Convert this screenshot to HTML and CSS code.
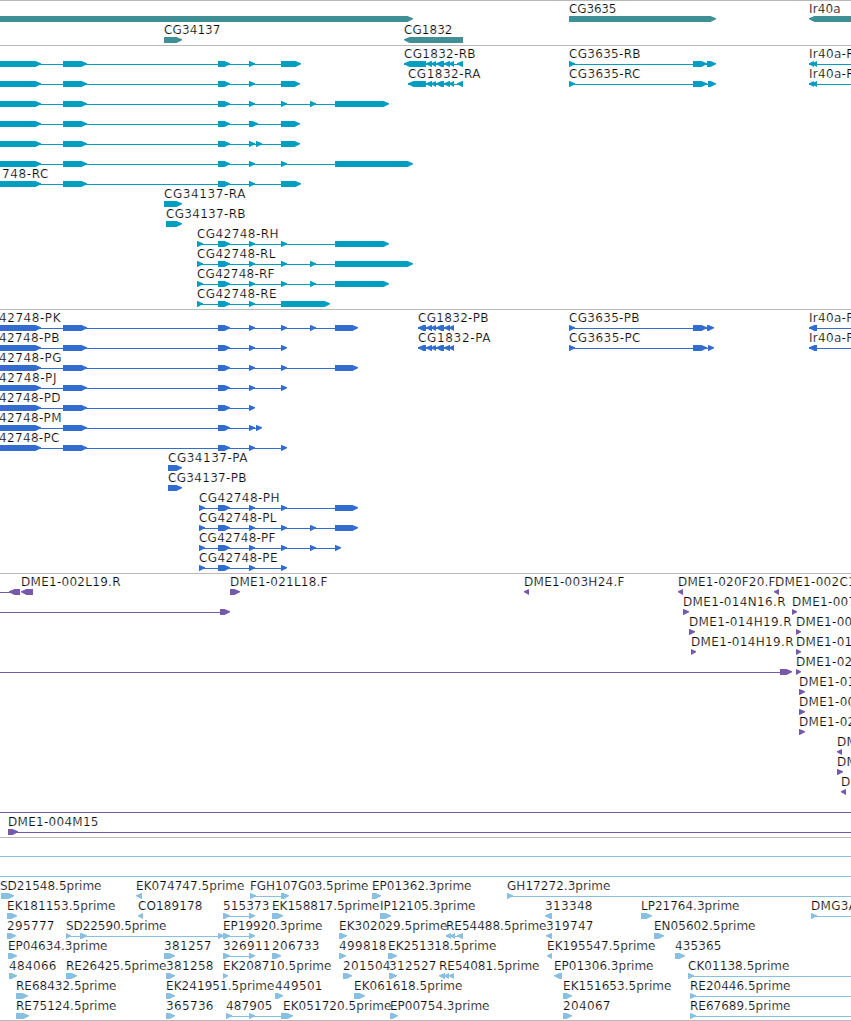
FILE: index.html
```
<!DOCTYPE html>
<html lang="en">
<head>
<meta charset="utf-8">
<title>Genome browser</title>
<link rel="stylesheet" href="styles.css">
</head>
<body>
<main class="browser" id="browser"></main>
<script src="tracks.js"></script>
</body>
</html>
```
FILE: styles.css
```
body {
  margin: 0;
  background: #fff;
}

.browser {
  display: flex;
  flex-direction: column;
  width: 851px;
  height: 1020px;
  overflow: hidden;
  border-bottom: 1px solid #bababa;
}

.track {
  flex: none;
  box-sizing: border-box;
  border-top: 1px solid #bababa;
}

.track-canvas {
  display: block;
  width: 851px;
  height: 100%;
  overflow: hidden;
}

.track-gene { height: 45px; fill: #3f8f96; }
.track-transcript { height: 264px; fill: #009fc2; }
.track-protein { height: 264px; fill: #316dd0; }
.track-clone { height: 264px; fill: #7759a9; }
.track-est { height: 183px; fill: #89bfe0; }

.label {
  fill: #000;
  stroke: #fff;
  stroke-width: 0.2px;
  font-family: "DejaVu Sans", sans-serif;
  font-size: 12px;
  white-space: pre;
}

.label-open {
  letter-spacing: 0.3px;
}
```
FILE: tracks.js
```
// Row syntax: "a>b" forward block, "a<b" reverse block, "a=b" connector line,
// followed after "|" by labels written as start,end,text (end may be empty).
const head = "-10=281 -10>41 63>87 218>230 ";
const phead = "-10>41 63>87 218>230 ";
const tracks = [
  { kind: "gene", pitch: 21, rows: [
    "-10>413 569>716 809<870|569,617,CG3635|809,841,Ir40a",
    "164>182 404<463|164,221,CG34137|404,453,CG1832"
  ] },
  { kind: "transcript", pitch: 20, rows: [
    head + "249>255 281>301 404=463 404<426 426<432 431<436 436<444 444<450 449<454 457<463 569=715 569>575 693>707 707>716 809=851 809<814 812<817|404,476,CG1832-RB|569,641,CG3635-RB|809,,Ir40a-R",
    head + "249>255 281>300 408=463 408<426 426<432 431<436 436<444 444<450 449<454 457<463 569=715 569>575 693>707 708>716 809=851 809<814 812<817|408,481,CG1832-RA|569,641,CG3635-RC|809,,Ir40a-R",
    head + "281=335 249>255 281>287 310>316 335>389",
    head + "249>258 281>300",
    head + "249>255 256>262 281>300",
    head + "281=335 249>255 281>287 335>413",
    head + "249>255 281>301|2,49,748-RC",
    "164>182|164,246,CG34137-RA",
    "166>182|166,246,CG34137-RB",
    "197=335 197>203 218>230 249>255 281>287 335>389|197,279,CG42748-RH",
    "197=335 197>203 218>230 249>255 281>287 310>316 335>413|197,276,CG42748-RL",
    "197=335 197>203 218>230 249>255 281>287 310>316 335>389|197,275,CG42748-RF",
    "197=281 197>203 218>230 249>255 281>330|197,277,CG42748-RE"
  ] },
  { kind: "protein", pitch: 20, rows: [
    "0=335 " + phead + "249>255 281>287 310>316 335>358 418=454 418<426 426<432 431<436 436<444 444<450 449<454 569=712 569>575 693>707 707>714 809=851 809<817|-1,61,42748-PK|418,489,CG1832-PB|569,640,CG3635-PB|809,,Ir40a-P",
    "0=285 " + phead + "249>255 281>287 418=454 418<426 426<432 431<436 436<444 444<450 449<454 569=712 569>575 693>707 708>714 809=851 809<817|-1,60,42748-PB|418,491,CG1832-PA|569,641,CG3635-PC|809,,Ir40a-P",
    "0=335 " + phead + "249>255 281>287 335>358|-1,62,42748-PG",
    "0=285 " + phead + "249>255 281>287|-1,57,42748-PJ",
    "0=253 " + phead + "249>255|-1,61,42748-PD",
    "0=260 " + phead + "249>255 256>262|-1,62,42748-PM",
    "0=285 " + phead + "249>255 281>287|-1,60,42748-PC",
    "168>182|168,248,CG34137-PA",
    "168>182|168,247,CG34137-PB",
    "199=335 199>205 218>230 249>255 281>287 335>358|199,280,CG42748-PH",
    "199=335 199>205 218>230 249>255 281>287 310>316 335>358|199,277,CG42748-PL",
    "199=338 199>205 218>230 249>255 281>287 310>316 335>341|199,276,CG42748-PF",
    "199=285 199>205 218>230 249>255 281>287|199,278,CG42748-PE"
  ] },
  { kind: "clone", pitch: 20, rows: [
    "0=12 9<20 21<33 230>240 524<529 678<683 774<779|21,121,DME1-002L19.R|230,328,DME1-021L18.F|524,625,DME1-003H24.F|678,776,DME1-020F20.F|775,,DME1-002C1",
    "0=222 220>230 683>689 792>797|683,786,DME1-014N16.R|792,,DME1-007",
    "689>695 796>801|689,792,DME1-014H19.R|796,,DME1-00",
    "691>696 796>801|691,794,DME1-014H19.R|796,,DME1-01",
    "0=782 780>792 796>801|796,,DME1-02",
    "799>805|799,,DME1-01",
    "799>805|799,,DME1-00",
    "799>805|799,,DME1-02",
    "837<842|837,,DM",
    "837>843|837,,DM",
    "841<846|841,,D",
    "0=851",
    "8=851 8>18|8,99,DME1-004M15"
  ] },
  { kind: "est", pitch: 20, rows: [
    "0=851",
    "0=851",
    "1>14 136<142 250=285 250>256 281>289 372>381 507=851 507>513|0,102,SD21548.5prime|136,245,EK074747.5prime|250,369,FGH107G03.5prime|372,472,EP01362.3prime|507,611,GH17272.3prime",
    "7>17 138<143 223=253 223>230 249>255 272>283 380>391 545<552 641>652 811=851 811>817|7,116,EK181153.5prime|138,203,CO189178|223,270,515373|272,380,EK158817.5prime|380,476,IP12105.3prime|545,593,313348|641,740,LP21764.3prime|811,,DMG3A",
    "7>16 66=253 66>71 80>87 218>224 223>230 249>255 339>347 446=463 446<451 450<455 457<463 546<552 654>664|7,55,295777|66,167,SD22590.5prime|223,323,EP19920.3prime|339,448,EK302029.5prime|446,547,RE54488.5prime|546,594,319747|654,756,EN05602.5prime",
    "8>17 164>175 223=253 223>230 249>255 272>281 339>346 388>397 547<552 675>685|8,108,EP04634.3prime|164,212,381257|223,271,326911|272,320,206733|339,387,499818|388,497,EK251318.5prime|547,656,EK195547.5prime|675,722,435365",
    "9>17 66>77 166>175 223>228 343>352 389>397 439<445 444<449 449<454 554<562 688=851 688>694|9,57,484066|66,167,RE26425.5prime|166,214,381258|223,332,EK208710.5prime|343,391,201504|389,437,312527|439,540,RE54081.5prime|554,654,EP01306.3prime|688,790,CK01138.5prime",
    "16>28 166>175 275>283 354>365 563>572 690=851 690>696|16,117,RE68432.5prime|166,275,EK241951.5prime|275,323,449501|354,463,EK061618.5prime|563,672,EK151653.5prime|690,791,RE20446.5prime",
    "16>29 166>175 226=283 226>232 249>255 281>287 282>293 390>398 563>572 690=851 690>696|16,117,RE75124.5prime|166,214,365736|226,273,487905|283,392,EK051720.5prime|390,490,EP00754.3prime|563,611,204067|690,791,RE67689.5prime"
  ] }
];

const BAR_TOP = 15;

function glyph(token, y) {
  const [, a, op, b] = token.match(/^(-?\d+)([<>=])(\d+)$/);
  const s = +a, e = +b;
  if (op === "=") return `<rect x="${s}" y="${y + 3}" width="${e - s}" height="1"/>`;
  const t = Math.min(5.5, e - s);
  return op === ">"
    ? `<path d="M${s} ${y}H${e - t}L${e} ${y + 2.3}V${y + 3.3}L${e - t} ${y + 6}H${s}Z"/>`
    : `<path d="M${e} ${y}H${s + t}L${s} ${y + 2.3}V${y + 3.3}L${s + t} ${y + 6}H${e}Z"/>`;
}

function label(spec, y) {
  const [x, end, text] = spec.split(",");
  const attrs = end
    ? `class="label" textLength="${(end - x - 0.5).toFixed(1)}"`
    : `class="label label-open"`;
  return `<text ${attrs} x="${x}" y="${y - 3}">${text}</text>`;
}

document.getElementById("browser").innerHTML = tracks.map(track => {
  const body = track.rows.map((row, i) => {
    const [shapes, ...labels] = row.split("|");
    const y = BAR_TOP + i * track.pitch;
    return shapes.trim().split(/\s+/).map(s => glyph(s, y)).join("") +
      labels.map(l => label(l, y)).join("");
  }).join("");
  return `<section class="track track-${track.kind}"><svg class="track-canvas">${body}</svg></section>`;
}).join("");
```
